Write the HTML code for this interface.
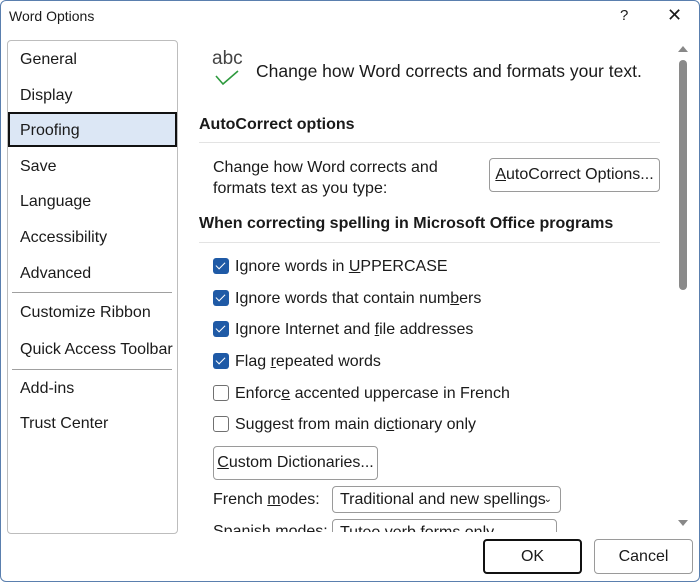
<!DOCTYPE html>
<html><head><style>
*{margin:0;padding:0;box-sizing:border-box}
body{width:700px;height:582px;background:#fff;font-family:"Liberation Sans",sans-serif;color:#1a1a1a;position:relative;overflow:hidden;font-size:15px}
.a{position:absolute;white-space:nowrap}
.nav{position:absolute;left:7px;top:40px;width:171px;height:494px;border:1px solid #bdbdbd;border-radius:4px}
.ni{position:absolute;left:20px;font-size:16px}
.sep{position:absolute;left:12px;width:160px;height:1px;background:#a0a0a0}
.cb{position:absolute;left:213px;width:16px;height:16px;border-radius:3px}
.on{background:#1f5aa6}
.off{border:1px solid #707070;background:#fff}
.on::after{content:"";position:absolute;left:5px;top:2px;width:4px;height:8px;border:solid #fff;border-width:0 1.5px 1.5px 0;transform:rotate(45deg)}
.lbl{position:absolute;left:235px;font-size:16px}
.btn{position:absolute;border:1px solid #9a9a9a;border-radius:4px;font-size:16px;text-align:center}
.hr{position:absolute;left:199px;width:461px;height:1px;background:#e3e3e3}
u{text-decoration:underline}
</style></head><body>
<div style="position:absolute;inset:0;border:1px solid #5a7fae;border-radius:6px"></div>
<div class="a" style="left:9px;top:8px;font-size:14px">Word Options</div>
<div class="a" style="left:620px;top:7px;font-size:15px">?</div>
<div class="a" style="left:667px;top:5px;font-size:18px">✕</div>
<div class="nav"></div>
<div style="position:absolute;left:8px;top:112px;width:169px;height:35px;background:#dce7f5;border:2px solid #111"></div>
<div class="ni a" style="top:51px">General</div>
<div class="ni a" style="top:87px">Display</div>
<div class="ni a" style="top:122px">Proofing</div>
<div class="ni a" style="top:158px">Save</div>
<div class="ni a" style="top:193px">Language</div>
<div class="ni a" style="top:229px">Accessibility</div>
<div class="ni a" style="top:265px">Advanced</div>
<div class="sep" style="top:292px"></div>
<div class="ni a" style="top:304px">Customize Ribbon</div>
<div class="ni a" style="top:341px">Quick Access Toolbar</div>
<div class="sep" style="top:369px"></div>
<div class="ni a" style="top:380px">Add-ins</div>
<div class="ni a" style="top:415px">Trust Center</div>

<div class="a" style="left:212px;top:48px;font-size:19px;color:#444">abc</div>
<svg style="position:absolute;left:214px;top:68px" width="28" height="20"><path d="M2 8 L9 16 L24 3" stroke="#2e9a3e" stroke-width="1.6" fill="none"/></svg>
<div class="a" style="left:256px;top:61px;font-size:17.5px">Change how Word corrects and formats your text.</div>
<div class="a" style="left:199px;top:116px;font-size:16px;font-weight:bold">AutoCorrect options</div>
<div class="hr" style="top:142px"></div>
<div class="a" style="left:213px;top:157px;font-size:16px;line-height:21px">Change how Word corrects and<br>formats text as you type:</div>
<div class="btn" style="left:489px;top:158px;width:171px;height:34px;line-height:32px"><u>A</u>utoCorrect Options...</div>
<div class="a" style="left:199px;top:215px;font-size:16px;font-weight:bold">When correcting spelling in Microsoft Office programs</div>
<div class="hr" style="top:242px"></div>
<div class="cb on" style="top:258px"></div><div class="lbl a" style="top:258px">Ignore words in <u>U</u>PPERCASE</div>
<div class="cb on" style="top:290px"></div><div class="lbl a" style="top:290px">Ignore words that contain num<u>b</u>ers</div>
<div class="cb on" style="top:321px"></div><div class="lbl a" style="top:321px">Ignore Internet and <u>f</u>ile addresses</div>
<div class="cb on" style="top:353px"></div><div class="lbl a" style="top:353px">Flag <u>r</u>epeated words</div>
<div class="cb off" style="top:385px"></div><div class="lbl a" style="top:385px">Enforc<u>e</u> accented uppercase in French</div>
<div class="cb off" style="top:416px"></div><div class="lbl a" style="top:416px">Suggest from main di<u>c</u>tionary only</div>
<div class="btn" style="left:213px;top:446px;width:165px;height:34px;line-height:32px"><u>C</u>ustom Dictionaries...</div>
<div class="a" style="left:213px;top:491px;font-size:16px">French <u>m</u>odes:</div>
<div class="btn" style="left:332px;top:486px;width:229px;height:27px;line-height:25px;text-align:left;padding-left:7px">Traditional and new spellings<span style="position:absolute;right:8px;font-size:10px">⌄</span></div>
<div style="position:absolute;left:190px;top:513px;width:480px;height:19px;overflow:hidden">
<div class="a" style="left:23px;top:10px;font-size:16px">Spanish modes:</div>
<div class="btn" style="left:142px;top:6px;width:225px;height:27px;line-height:25px;text-align:left;padding-left:7px">Tuteo verb forms only</div>
</div>
<div style="position:absolute;left:679px;top:60px;width:8px;height:230px;background:#8a8a8a;border-radius:4px"></div>
<svg style="position:absolute;left:677px;top:44px" width="12" height="10"><path d="M1 8 L6 2 L11 8Z" fill="#888"/></svg>
<svg style="position:absolute;left:677px;top:518px" width="12" height="10"><path d="M1 2 L6 8 L11 2Z" fill="#888"/></svg>
<div class="btn" style="left:483px;top:539px;width:99px;height:35px;line-height:32px;border:2px solid #111">OK</div>
<div class="btn" style="left:594px;top:539px;width:99px;height:35px;line-height:33px">Cancel</div>
</body></html>
